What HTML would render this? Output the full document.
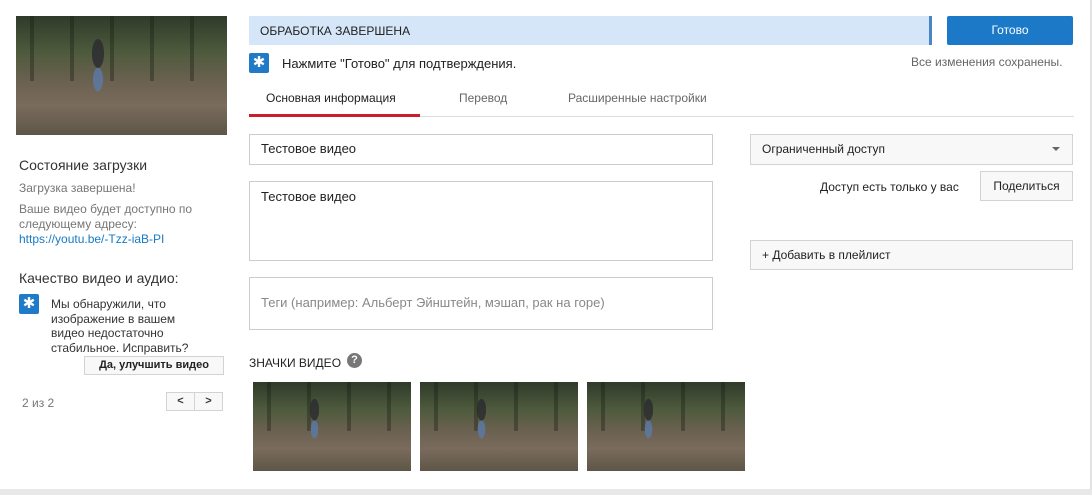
<!DOCTYPE html>
<html><head><meta charset="utf-8"><style>
*{box-sizing:border-box;margin:0;padding:0}
body{width:1092px;height:495px;background:#fff;font-family:"Liberation Sans",sans-serif;position:relative;overflow:hidden;color:#222}
.a{position:absolute}
.photo{background:linear-gradient(180deg,#2f3a2a 0%,#4d5a3c 30%,#6b6150 55%,#7a6b5c 75%,#5e5648 100%)}
.photo:before{content:"";position:absolute;inset:0;background:repeating-linear-gradient(90deg,transparent 0 14px,rgba(20,25,15,.35) 14px 18px,transparent 18px 40px);height:55%}
.photo:after{content:"";position:absolute;left:30%;top:15%;width:18%;height:55%;background:radial-gradient(ellipse at 50% 30%,rgba(42,42,48,.8) 0 22%,transparent 23%),radial-gradient(ellipse at 50% 70%,rgba(90,122,168,.8) 0 18%,transparent 19%)}
.box{border:1px solid #ccc;background:#fff}
.star{width:20px;height:20px;background:#1f7ac7;border-radius:2px;color:#fff;font-size:15px;line-height:20px;text-align:center}
.btn{border:1px solid #d3d3d3;background:#f8f8f8;font-weight:bold;font-size:11px;color:#333;text-align:center}
</style></head><body>
<div class="a" style="right:0;top:0;width:2px;height:495px;background:#e2e2e2"></div>
<div class="a" style="left:0;top:489px;width:1092px;height:6px;background:#e8e8e8"></div>

<div class="a photo" style="left:16px;top:16px;width:211px;height:119px"></div>
<div class="a" style="left:19px;top:157px;font-size:14px;color:#333">Состояние загрузки</div>
<div class="a" style="left:19px;top:181px;font-size:12px;color:#767676">Загрузка завершена!</div>
<div class="a" style="left:19px;top:202px;font-size:12px;color:#767676;line-height:15px">Ваше видео будет доступно по<br>следующему адресу:<br><span style="color:#167ac6">https://youtu.be/-Tzz-iaB-PI</span></div>
<div class="a" style="left:19px;top:270px;font-size:14px;color:#333">Качество видео и аудио:</div>
<div class="a star" style="left:19px;top:294px">✱</div>
<div class="a" style="left:51px;top:297px;font-size:12px;color:#333;line-height:14.5px">Мы обнаружили, что<br>изображение в вашем<br>видео недостаточно<br>стабильное. Исправить?</div>
<div class="a btn" style="left:84px;top:356px;width:140px;height:19px;line-height:17px;color:#222">Да, улучшить видео</div>
<div class="a" style="left:22px;top:396px;font-size:12px;color:#767676">2 из 2</div>
<div class="a btn" style="left:166px;top:392px;width:29px;height:19px;line-height:17px">&lt;</div>
<div class="a btn" style="left:194px;top:392px;width:29px;height:19px;line-height:17px">&gt;</div>

<div class="a" style="left:249px;top:16px;width:683px;height:29px;background:#d4e6f7;border-right:3px solid #4a86c5"></div>
<div class="a" style="left:260px;top:24px;font-size:12px;color:#222">ОБРАБОТКА ЗАВЕРШЕНА</div>
<div class="a" style="left:947px;top:16px;width:126px;height:29px;background:#1b79c7;border-radius:2px;color:#fff;font-size:12px;text-align:center;line-height:29px">Готово</div>
<div class="a star" style="left:249px;top:53px">✱</div>
<div class="a" style="left:282px;top:56px;font-size:13px;color:#222">Нажмите "Готово" для подтверждения.</div>
<div class="a" style="left:911px;top:55px;font-size:12px;color:#666">Все изменения сохранены.</div>

<div class="a" style="left:266px;top:91px;font-size:12px;color:#222">Основная информация</div>
<div class="a" style="left:459px;top:91px;font-size:12px;color:#666">Перевод</div>
<div class="a" style="left:568px;top:91px;font-size:12px;color:#666">Расширенные настройки</div>
<div class="a" style="left:249px;top:116px;width:825px;height:1px;background:#ddd"></div>
<div class="a" style="left:249px;top:114px;width:171px;height:3px;background:#c8202b"></div>

<div class="a box" style="left:249px;top:134px;width:464px;height:31px"></div>
<div class="a" style="left:261px;top:141px;font-size:13px">Тестовое видео</div>
<div class="a box" style="left:249px;top:181px;width:464px;height:80px"></div>
<div class="a" style="left:261px;top:189px;font-size:13px">Тестовое видео</div>
<div class="a box" style="left:249px;top:277px;width:464px;height:53px"></div>
<div class="a" style="left:261px;top:295px;font-size:13px;color:#888">Теги (например: Альберт Эйнштейн, мэшап, рак на горе)</div>

<div class="a" style="left:249px;top:356px;font-size:12px;color:#222">ЗНАЧКИ ВИДЕО</div>
<div class="a" style="left:347px;top:353px;width:15px;height:15px;border-radius:50%;background:#777;color:#fff;font-size:11px;font-weight:bold;text-align:center;line-height:15px">?</div>
<div class="a photo" style="left:253px;top:382px;width:158px;height:89px"></div>
<div class="a photo" style="left:420px;top:382px;width:158px;height:89px"></div>
<div class="a photo" style="left:587px;top:382px;width:158px;height:89px"></div>

<div class="a" style="left:750px;top:134px;width:323px;height:31px;border:1px solid #d3d3d3;background:#f8f8f8"></div>
<div class="a" style="left:762px;top:142px;font-size:12px;color:#222">Ограниченный доступ</div>
<div class="a" style="left:1052px;top:147px;border-left:4px solid transparent;border-right:4px solid transparent;border-top:4px solid #666"></div>
<div class="a" style="left:820px;top:180px;font-size:12px;color:#222">Доступ есть только у вас</div>
<div class="a btn" style="left:980px;top:171px;width:93px;height:30px;line-height:28px;font-weight:normal;color:#222;font-size:12px">Поделиться</div>
<div class="a" style="left:750px;top:240px;width:323px;height:30px;border:1px solid #d3d3d3;background:#f8f8f8"></div>
<div class="a" style="left:762px;top:248px;font-size:12px;color:#222">+ Добавить в плейлист</div>
</body></html>
